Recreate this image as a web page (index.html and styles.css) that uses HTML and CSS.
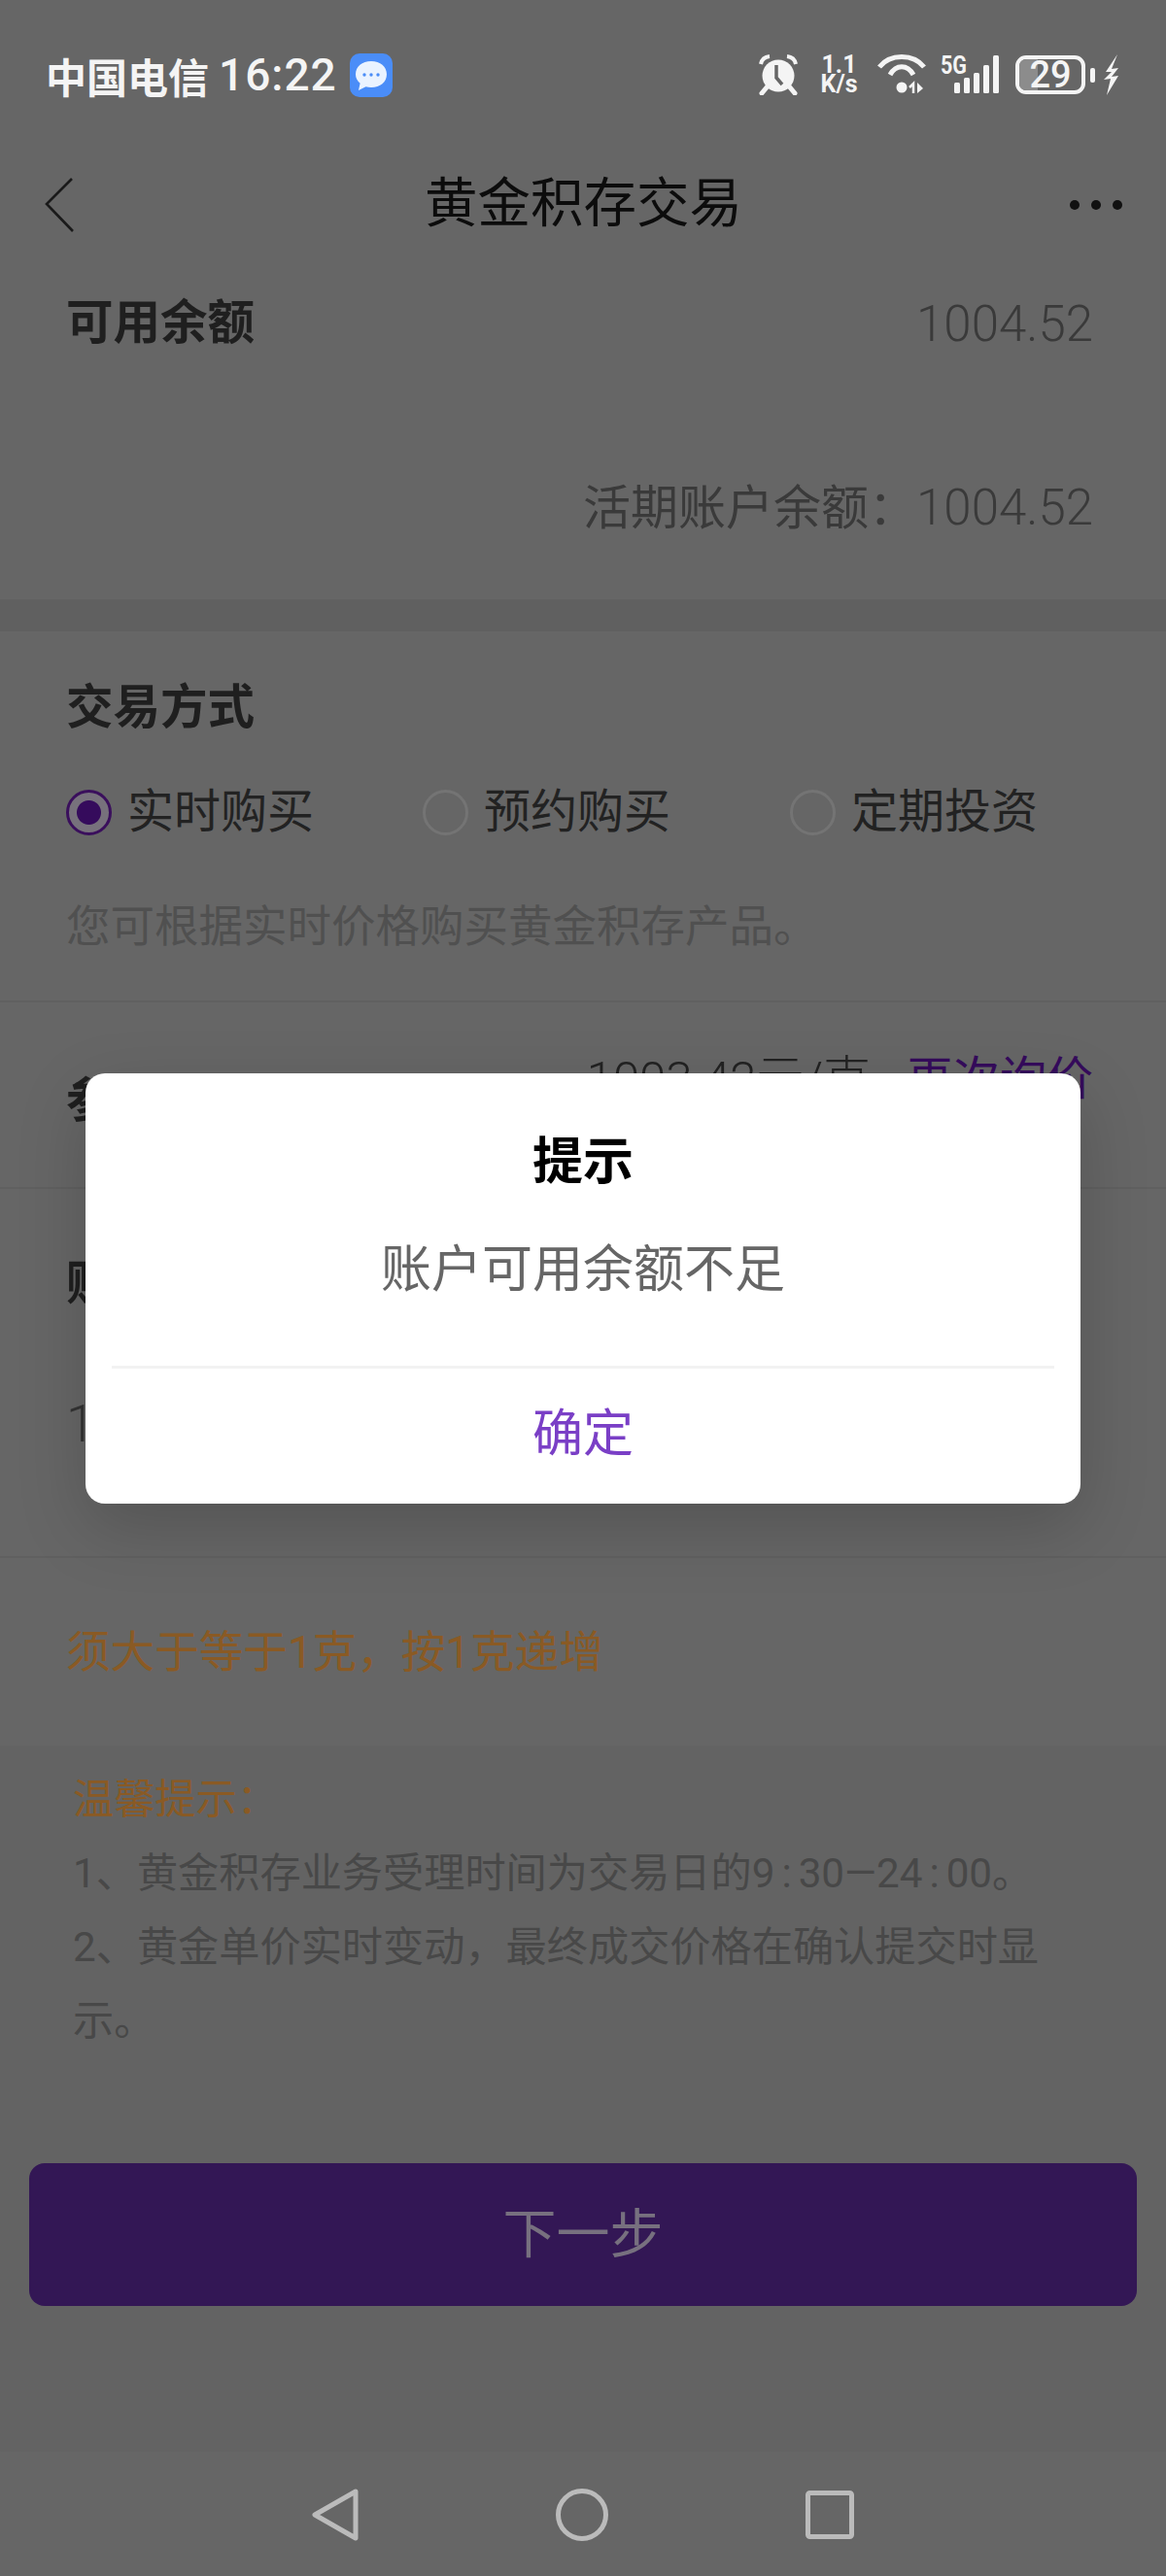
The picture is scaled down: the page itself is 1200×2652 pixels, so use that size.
FILE: index.html
```html
<!DOCTYPE html>
<html lang="zh-CN">

<head>
  <meta charset="UTF-8">
  <title>黄金积存交易</title>
  <meta name="viewport" content="width=device-width, initial-scale=1.0">
  <link rel="stylesheet" href="styles.css">
</head>

<body>
<div class="screen">

  <!-- status bar -->
  <div class="status-bar">
    <div class="status-left">
      <span class="carrier">中国电信</span>
      <span class="clock">16:22</span>
      <svg class="chat-icon" width="44" height="45" viewBox="0 0 44 45">
        <rect width="44" height="45" rx="10" fill="#4a8df8"/>
        <path d="M22 8c9.500 0 16 5.700 16 13.500S31.500 35 22 35c-2 0-3.800-.3-5.500-.8L9 38l1.600-7.300C7.700 28.300 6 25.200 6 21.500 6 13.700 12.500 8 22 8z" fill="#eaf3ff"/>
        <circle cx="15" cy="22" r="1.700" fill="#4a8df8"/>
        <circle cx="22" cy="22" r="1.700" fill="#4a8df8"/>
        <circle cx="29" cy="22" r="1.700" fill="#4a8df8"/>
      </svg>
    </div>
    <div class="status-right">
      <svg width="40" height="42" viewBox="0 0 40 42">
        <circle cx="20" cy="22" r="16.500" fill="#f4f4f4"/>
        <path d="M2 10C3 5 6 2.500 11 2M38 10C37 5 34 2.500 29 2" fill="none" stroke="#f4f4f4" stroke-width="4"/>
        <path d="M8 34l-5 6M32 34l5 6" stroke="#f4f4f4" stroke-width="5" stroke-linecap="round"/>
        <path d="M18 11v13l6 7" fill="none" stroke="#666" stroke-width="3.500"/>
      </svg>
      <div class="net-speed">
        <span>1.1</span>
        <span>K/s</span>
      </div>
      <svg width="52" height="42" viewBox="0 0 52 42">
        <path d="M2 13C13 -1 37 -1 48 13" fill="none" stroke="#f4f4f4" stroke-width="5"/>
        <path d="M13 21C19 10 31 10 37 21" fill="none" stroke="#f4f4f4" stroke-width="5"/>
        <circle cx="25" cy="34" r="5.500" fill="#f4f4f4"/>
        <path d="M37 40V30l-4 4" fill="none" stroke="#f4f4f4" stroke-width="2.500"/>
        <path d="M41 29v11l6-5z" fill="#f4f4f4"/>
      </svg>
      <svg class="signal" width="60" height="42" viewBox="0 0 60 42">
        <text class="gen-label" x="0" y="20" textLength="27" lengthAdjust="spacingAndGlyphs">5G</text>
        <rect x="14" y="29" width="6" height="11" rx="1.500" fill="#f4f4f4"/>
        <rect x="24" y="24" width="6" height="16" rx="1.500" fill="#f4f4f4"/>
        <rect x="34" y="19" width="6" height="21" rx="1.500" fill="#f4f4f4"/>
        <rect x="44" y="11" width="6" height="29" rx="1.500" fill="#f4f4f4"/>
        <rect x="54" y="1" width="6" height="39" rx="1.500" fill="#f4f4f4"/>
      </svg>
      <div class="battery">
        <div class="battery-body">
          <div class="battery-fill"></div>
          <span class="battery-level">29</span>
        </div>
        <div class="battery-tip"></div>
      </div>
      <svg width="17" height="44" viewBox="0 0 17 44">
        <path d="M15 1L3 19h6L1 27l7-1-4 17L16 23l-7 1 7-9-7 1z" fill="#f4f4f4"/>
      </svg>
    </div>
  </div>

  <!-- title bar -->
  <div class="title-bar">
    <svg class="back-icon" width="30" height="56" viewBox="0 0 30 56">
      <path d="M28 1L2 27l27 28" fill="none" stroke="#1a1a1a" stroke-width="2.600"/>
    </svg>
    <div class="page-title">黄金积存交易</div>
    <div class="more-dots"><i></i><i></i><i></i></div>
  </div>

  <!-- balance -->
  <div class="balance">
    <div class="balance-row">
      <span class="field-label">可用余额</span>
      <span class="amount-text">1004.52</span>
    </div>
    <div class="balance-sub">
      <span class="sub-label">活期账户余额<span class="wide-colon">：</span></span><span class="amount-text">1004.52</span>
    </div>
  </div>

  <!-- trade form -->
  <div class="trade">
    <div class="method">
      <div class="field-label">交易方式</div>
      <div class="radio-row">
        <div class="radio-item first">
          <span class="radio checked"></span>
          <span>实时购买</span>
        </div>
        <div class="radio-item second">
          <span class="radio"></span>
          <span>预约购买</span>
        </div>
        <div class="radio-item">
          <span class="radio"></span>
          <span>定期投资</span>
        </div>
      </div>
      <div class="hint">您可根据实时价格购买黄金积存产品。</div>
    </div>

    <div class="price-row">
      <span class="field-label price-label">参考价格</span>
      <div class="price-value">
        <span class="price-text">1003.42元/克</span>
        <span class="requery">再次询价</span>
      </div>
    </div>

    <div class="quantity">
      <div class="field-label quantity-label">购买克数</div>
      <div class="quantity-value">1</div>
    </div>

    <div class="limit">须大于等于1克，按1克递增</div>
  </div>

  <!-- notes and button -->
  <div class="lower">
    <div class="notes">
      <div class="notes-title">温馨提示：</div>
      <div>1、黄金积存业务受理时间为交易日的9<span class="time-sep">:</span>30—24<span class="time-sep">:</span>00。</div>
      <div>2、黄金单价实时变动，最终成交价格在确认提交时显示。</div>
    </div>
    <div class="next-btn">下一步</div>
  </div>

  <!-- android nav -->
  <div class="system-nav">
    <svg width="48" height="54" viewBox="0 0 48 54">
      <path d="M45 3L3 27l42 24z" fill="none" stroke="#bbb" stroke-width="5" stroke-linejoin="round"/>
    </svg>
    <svg width="54" height="54" viewBox="0 0 54 54">
      <circle cx="27" cy="27" r="24.500" fill="none" stroke="#bbb" stroke-width="5"/>
    </svg>
    <svg width="50" height="50" viewBox="0 0 50 50">
      <rect x="2.500" y="2.500" width="45" height="45" rx="2" fill="none" stroke="#bbb" stroke-width="5"/>
    </svg>
  </div>

  <!-- dialog -->
  <div class="dialog">
    <div class="dialog-title">提示</div>
    <div class="dialog-msg">账户可用余额不足</div>
    <div class="dialog-line"></div>
    <div class="dialog-btn">确定</div>
  </div>

</div>
</body>
</html>
```

FILE: styles.css
```css
body {
  margin: 0;
  padding: 0;
  font-family: Roboto, "Noto Sans CJK SC", sans-serif;
}

.screen {
  position: relative;
  display: flex;
  flex-direction: column;
  width: 1200px;
  height: 2652px;
  overflow: hidden;
  background-color: #636363;
  color: #222;
}

/* status bar */
.status-bar {
  display: flex;
  align-items: center;
  justify-content: space-between;
  height: 154px;
  padding: 0 48px 0 47px;
  background-color: #666;
  color: #f4f4f4;
}

.status-left {
  display: flex;
  align-items: center;
}

.carrier {
  font-size: 42px;
  font-weight: 700;
}

.clock {
  margin-left: 10px;
  font-size: 46px;
  font-weight: 500;
  letter-spacing: 1px;
}

.chat-icon {
  margin-left: 13px;
}

.status-right {
  display: flex;
  align-items: center;
}

.status-right > * {
  flex-shrink: 0;
}

.status-right > svg:nth-child(1) {
  margin-right: 21px;
}

.net-speed {
  display: flex;
  flex-direction: column;
  align-items: center;
  width: 43px;
  margin-right: 18px;
  font-size: 25px;
  font-weight: 700;
  line-height: 20px;
}

.status-right > svg:nth-child(3) {
  margin-right: 13px;
}

.signal {
  overflow: visible;
}

.gen-label {
  font-family: Roboto, sans-serif;
  font-size: 25px;
  font-weight: 700;
  fill: #f4f4f4;
}

.battery {
  display: flex;
  align-items: center;
  margin: 0 8px 0 17px;
}

.battery-body {
  position: relative;
  display: flex;
  align-items: center;
  justify-content: center;
  box-sizing: border-box;
  width: 72px;
  height: 40px;
  border: 4px solid #f4f4f4;
  border-radius: 11px;
}

.battery-fill {
  position: absolute;
  top: 0;
  bottom: 0;
  left: 0;
  width: 29%;
  border-radius: 7px 0 0 7px;
  background-color: #8c8c8c;
}

.battery-level {
  position: relative;
  font-size: 38px;
  font-weight: 500;
  line-height: 32px;
}

.battery-tip {
  width: 5px;
  height: 15px;
  margin-left: 5px;
  border-radius: 2px;
  background-color: #f4f4f4;
}

/* title bar */
.title-bar {
  display: grid;
  grid-template-columns: 1fr auto 1fr;
  align-items: center;
  height: 108px;
  padding: 0 45px 0 46px;
  background-color: #666;
}

.back-icon {
  margin-top: 6px;
}

.page-title {
  margin-top: 2px;
  font-size: 54.500px;
  line-height: 60px;
  color: #0c0c0c;
}

.more-dots {
  display: flex;
  justify-content: flex-end;
  gap: 12px;
  margin-top: 6px;
}

.more-dots i {
  width: 10px;
  height: 10px;
  border-radius: 50%;
  background-color: #111;
}

/* balance */
.balance {
  box-sizing: border-box;
  height: 355px;
  padding: 41px 75px 0 68px;
  background-color: #666;
}

.balance-row {
  display: flex;
  align-items: center;
  justify-content: space-between;
  height: 60px;
}

.balance-sub {
  display: flex;
  align-items: baseline;
  justify-content: flex-end;
  height: 60px;
  margin-top: 120px;
}

.field-label {
  font-size: 48.500px;
  font-weight: 700;
  line-height: 60px;
  color: #1f1f1f;
}

.amount-text {
  font-size: 51px;
  font-weight: 300;
  color: #3a3a3a;
}

.sub-label {
  font-size: 49px;
  color: #3a3a3a;
}

.wide-colon {
  font-family: "Noto Sans CJK TC", sans-serif;
}

/* trade form */
.trade {
  border-top: 33px solid #606060;
  background-color: #666;
}

.method {
  box-sizing: border-box;
  height: 382px;
  padding: 49px 0 0 68px;
  border-bottom: 2px solid #606060;
}

.radio-row {
  display: flex;
  margin-top: 47px;
  font-size: 48px;
  line-height: 60px;
}

.radio-item {
  display: flex;
  align-items: center;
  gap: 16px;
}

.radio-item.first {
  width: 367px;
}

.radio-item.second {
  width: 378px;
}

.radio {
  box-sizing: border-box;
  width: 47px;
  height: 47px;
  border: 3px solid #747474;
  border-radius: 50%;
}

.radio.checked {
  border-color: #3a0f5c;
  background-color: #77717c;
  background-image: radial-gradient(circle, #350b5c 0 12px, transparent 13px);
}

.hint {
  margin-top: 59px;
  font-size: 45.500px;
  line-height: 60px;
  color: #505050;
}

.price-row {
  display: flex;
  align-items: flex-start;
  justify-content: space-between;
  box-sizing: border-box;
  height: 192px;
  padding: 49px 75px 0 68px;
  border-bottom: 2px solid #606060;
}

.price-label {
  margin-top: 23px;
}

.price-value {
  display: flex;
  gap: 37px;
  font-size: 48px;
  line-height: 60px;
}

.price-text {
  font-size: 49px;
  font-weight: 300;
}

.requery {
  color: #350b5c;
}

.quantity {
  box-sizing: border-box;
  height: 380px;
  padding: 68px 68px 0;
  border-bottom: 2px solid #606060;
}

.quantity-value {
  margin-top: 84px;
  font-size: 54px;
  font-weight: 300;
  line-height: 60px;
  color: #333;
}

.limit {
  box-sizing: border-box;
  height: 193px;
  padding: 68px 0 0 68px;
  font-size: 45.600px;
  line-height: 60px;
  color: #8a5a24;
}

/* notes and button */
.lower {
  flex: 1;
}

.notes {
  padding: 18px 100px 0 75px;
  font-size: 42.200px;
  line-height: 76px;
  color: #484848;
}

.notes-title {
  color: #8a5a24;
}

.time-sep {
  margin: 0 7px;
}

.next-btn {
  display: flex;
  align-items: center;
  justify-content: center;
  box-sizing: border-box;
  height: 147px;
  margin: 108px 30px 0;
  padding-bottom: 12px;
  border-radius: 16px;
  background-color: #331755;
  font-size: 55px;
  color: #77707f;
}

.system-nav {
  display: flex;
  align-items: center;
  justify-content: center;
  gap: 203px;
  box-sizing: border-box;
  height: 128px;
  padding-top: 2px;
  background-color: #666;
}

/* dialog */
.dialog {
  position: absolute;
  top: 1105px;
  left: 88px;
  display: flex;
  flex-direction: column;
  width: 1024px;
  height: 443px;
  border-radius: 20px;
  background-color: #fff;
  box-shadow: 0 24px 70px rgba(0, 0, 0, 0.18);
  text-align: center;
}

.dialog-title {
  margin-top: 62px;
  font-size: 52px;
  font-weight: 700;
  line-height: 60px;
  color: #000;
}

.dialog-msg {
  margin-top: 51px;
  font-size: 52px;
  line-height: 60px;
  color: #666;
}

.dialog-line {
  height: 3px;
  margin: 68px 27px 0;
  background-color: #f2f2f2;
}

.dialog-btn {
  flex: 1;
  display: flex;
  align-items: center;
  justify-content: center;
  padding-bottom: 14px;
  font-size: 52px;
  color: #7a3fc6;
}
```
